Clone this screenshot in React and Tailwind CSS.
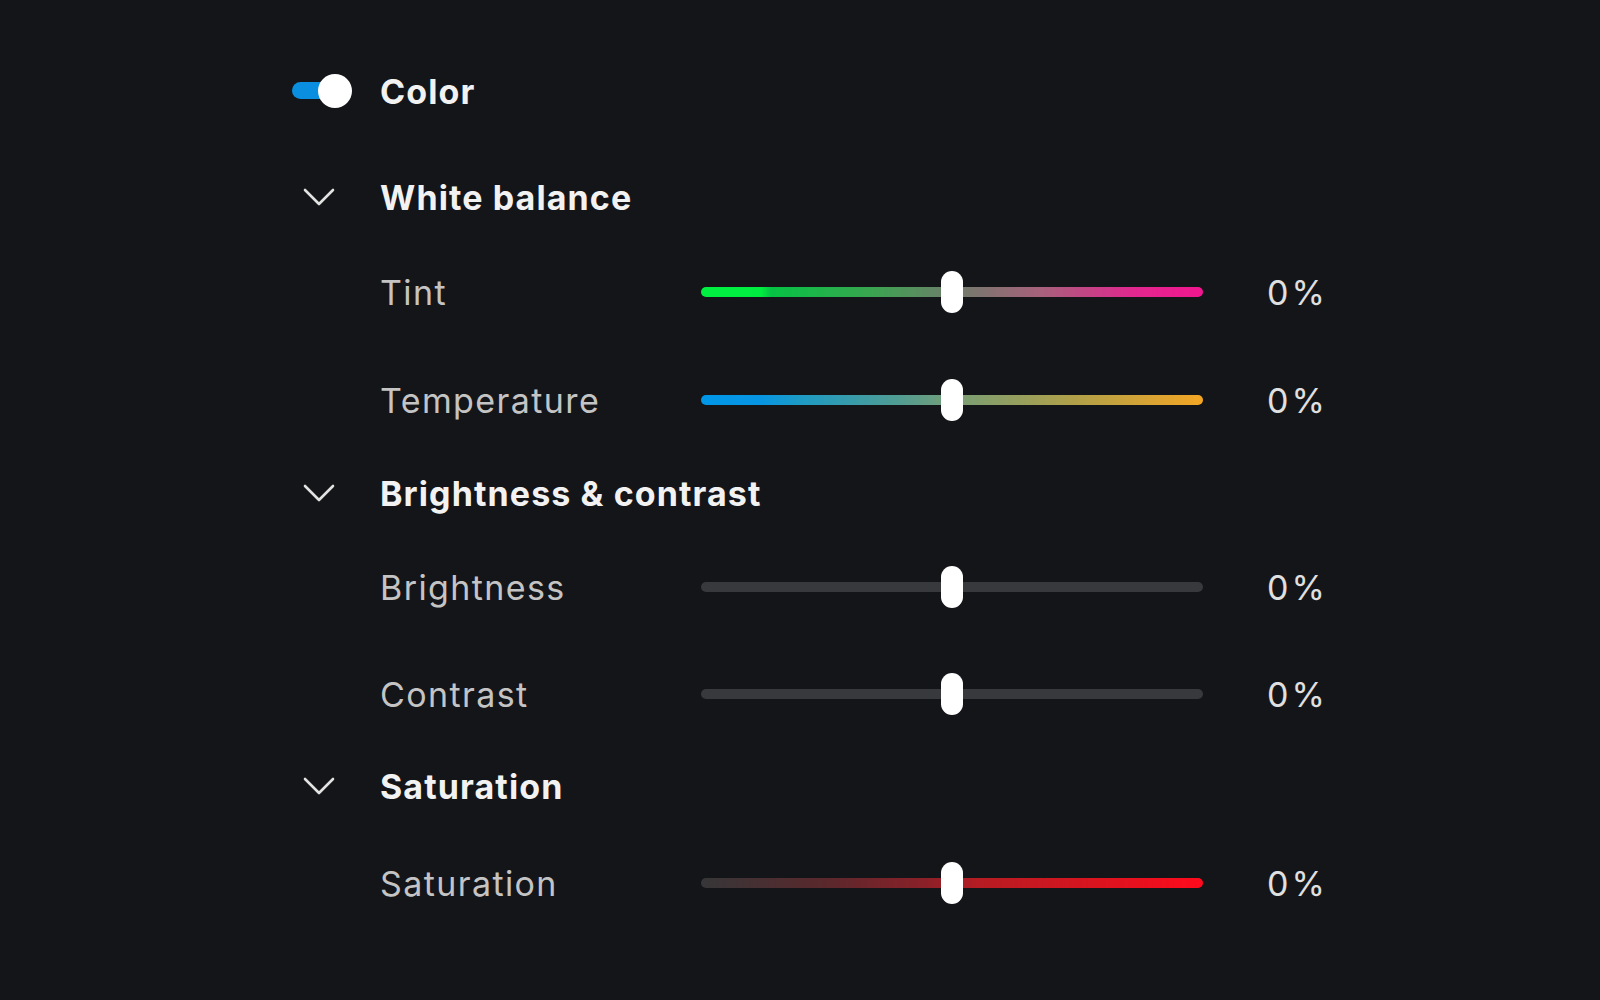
import React from "react";

const Chevron = () => (
  <svg width="32" height="19" viewBox="0 0 32 19" fill="none" className="ml-[11px]">
    <polyline points="2,2 16,16 30,2" stroke="#e2e2e2" strokeWidth="2.6" strokeLinecap="round" strokeLinejoin="round" />
  </svg>
);

const Toggle = () => (
  <div className="relative w-[60px] h-[34px]">
    <div className="absolute left-0 top-[8px] h-[17px] w-[46px] rounded-full bg-[#0a8fe0]"></div>
    <div className="absolute right-0 top-0 h-[34px] w-[34px] rounded-full bg-white"></div>
  </div>
);

const Header = ({ title, toggle, className = "" }) => (
  <div className={`flex items-center h-[60px] ${className}`}>
    <div className="w-[88px] flex items-center">{toggle ? <Toggle /> : <Chevron />}</div>
    <span className="text-[34px] font-bold text-[#f2f2f2] tracking-[1.1px]">{title}</span>
  </div>
);

const SliderRow = ({ label, track, className = "" }) => (
  <div className={`flex items-center h-[60px] pl-[88px] ${className}`}>
    <span className="w-[321px] text-[34px] text-[#c4c4c4] tracking-[1.4px]">{label}</span>
    <div className={`relative w-[502px] h-[10px] rounded-full ${track}`}>
      <div className="absolute left-[240px] top-[-16px] h-[42px] w-[22px] rounded-full bg-white"></div>
    </div>
    <span className="ml-[64px] text-[34px] text-[#e0e0e0] tracking-[3px]">0%</span>
  </div>
);

export default function App() {
  return (
    <main
      className="min-h-screen w-full bg-[#141518] pl-[292px] pt-[61px]"
      style={{ fontFamily: "Inter, 'Liberation Sans', sans-serif" }}
    >
      <div className="flex flex-col">
        <Header title="Color" toggle />
        <Header title="White balance" className="mt-[46px]" />
        <SliderRow
          label="Tint"
          className="mt-[35px]"
          track="bg-[linear-gradient(to_right,#00f040_0%,#00ee40_12%,#06c244_14%,#3aa550_34%,#6e7d6a_50%,#a8607c_68%,#e0288f_86%,#f2168f_100%)]"
        />
        <SliderRow
          label="Temperature"
          className="mt-[48px]"
          track="bg-[linear-gradient(to_right,#0096e8_0%,#0795e2_12%,#1e9bc4_20%,#4d9c96_38%,#7c9e72_52%,#b0a04a_74%,#f4a624_100%)]"
        />
        <Header title="Brightness & contrast" className="mt-[33px]" />
        <SliderRow label="Brightness" className="mt-[34px]" track="bg-[#38393d]" />
        <SliderRow label="Contrast" className="mt-[47px]" track="bg-[#38393d]" />
        <Header title="Saturation" className="mt-[32px]" />
        <SliderRow
          label="Saturation"
          className="mt-[37px]"
          track="bg-[linear-gradient(to_right,#363638_0%,#5a282c_25%,#8c2028_45%,#b51c23_55%,#d8141f_78%,#ff0a1c_100%)]"
        />
      </div>
    </main>
  );
}
